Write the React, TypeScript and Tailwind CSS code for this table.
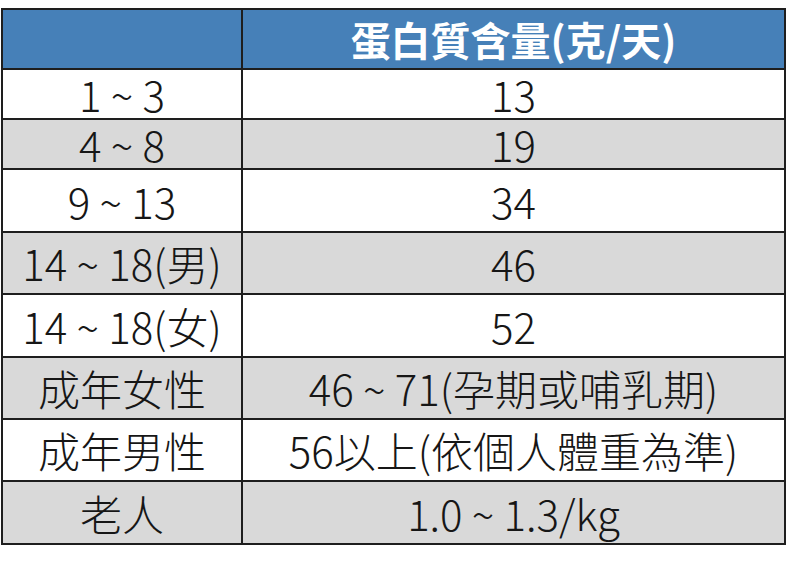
const rows: { age: string; amount: string; h: string; gray: boolean }[] = [
  { age: '1 ~ 3', amount: '13', h: 'h-[50px]', gray: false },
  { age: '4 ~ 8', amount: '19', h: 'h-[50px]', gray: true },
  { age: '9 ~ 13', amount: '34', h: 'h-[63px]', gray: false },
  { age: '14 ~ 18(男)', amount: '46', h: 'h-[62px]', gray: true },
  { age: '14 ~ 18(女)', amount: '52', h: 'h-[63px]', gray: false },
  { age: '成年女性', amount: '46 ~ 71(孕期或哺乳期)', h: 'h-[62px]', gray: true },
  { age: '成年男性', amount: '56以上(依個人體重為準)', h: 'h-[62px]', gray: false },
  { age: '老人', amount: '1.0 ~ 1.3/kg', h: 'h-[61px]', gray: true },
]

const Cell = ({ children, className }: { children: React.ReactNode; className: string }) => (
  <div className={`flex items-center justify-center ${className}`}>{children}</div>
)

export default function App() {
  return (
    <div className="w-[788px] h-[565px] bg-white pt-[8px] pl-[1px] font-['Noto_Sans_CJK_TC',sans-serif] text-[#161616]">
      <div className="w-[785px] border-2 border-[#1e1e1e] grid grid-cols-[240px_1fr]">
        <Cell className="h-[60px] bg-[#4680b8] border-r-2 border-b-2 border-[#1e1e1e]">{''}</Cell>
        <Cell className="h-[60px] bg-[#4680b8] border-b-2 border-[#1e1e1e] text-white text-[40px] font-bold leading-none">
          蛋白質含量(克/天)
        </Cell>
        {rows.map((r, i) => {
          const last = i === rows.length - 1
          const bg = r.gray ? 'bg-[#d9d9d9]' : 'bg-white'
          const bottom = last ? '' : 'border-b-2'
          return (
            <>
              <Cell key={`a${i}`} className={`${r.h} ${bg} ${bottom} border-r-2 border-[#1e1e1e] text-[42px] font-light leading-none`}>
                {r.age}
              </Cell>
              <Cell key={`b${i}`} className={`${r.h} ${bg} ${bottom} border-[#1e1e1e] text-[42px] font-light leading-none`}>
                {r.amount}
              </Cell>
            </>
          )
        })}
      </div>
    </div>
  )
}
